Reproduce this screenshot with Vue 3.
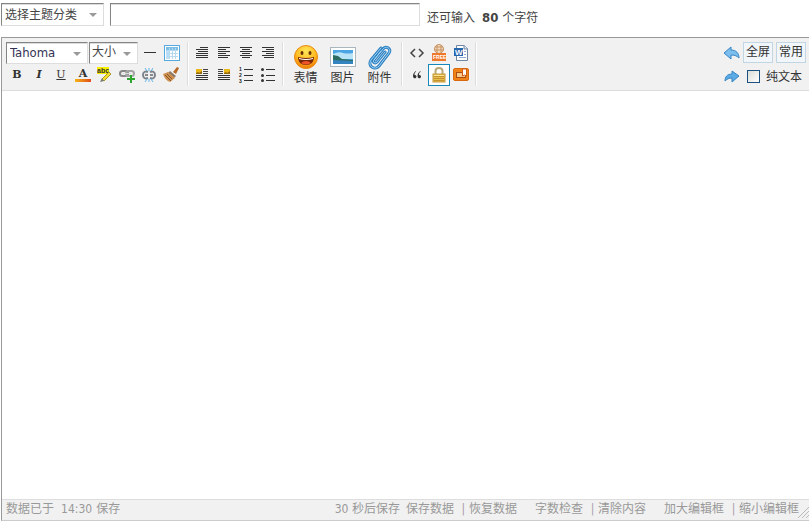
<script setup>
import { ref } from 'vue'

const topic = ref('')
const title = ref('')
const font = ref('Tahoma')
const size = ref('')
const plain = ref(false)
const content = ref('')

// Each entry lists [start, end] of the text lines, top to bottom.
const aligns = [
  { label: '自动排版', rows: [[4, 12], [0, 12], [2, 12], [0, 12], [0, 12], [0, 12]] },
  { label: '左对齐', rows: [[0, 12], [0, 8], [0, 12], [0, 8], [0, 12], [0, 10]] },
  { label: '居中', rows: [[0, 12], [2, 10], [0, 12], [2, 10], [0, 12], [2, 10]] },
  { label: '右对齐', rows: [[0, 12], [4, 12], [0, 12], [4, 12], [0, 12], [2, 12]] }
]
const floats = [
  { label: '左浮动', pic: 0, text: 7 },
  { label: '右浮动', pic: 6, text: 0 }
]
const links = [
  ['保存数据', '恢复数据'],
  ['字数检查', '清除内容'],
  ['加大编辑框', '缩小编辑框']
]
</script>

<template>
  <main class="page">
    <div class="subject">
      <span class="pick pick-topic">
        <select v-model="topic" aria-label="选择主题分类"><option value="">选择主题分类</option></select>
        <svg class="arrow" width="8" height="4" viewBox="0 0 8 4"><path d="M0 0h8L4 4z" /></svg>
      </span>
      <input v-model="title" class="title" type="text" aria-label="标题">
      <p class="left-over">还可输入<b>80</b>个字符</p>
    </div>

    <section class="editor">
      <div class="toolbar">
        <div class="group first">
          <div class="row fields">
            <span class="pick pick-font">
              <select v-model="font" aria-label="字体"><option>Tahoma</option></select>
              <svg class="arrow" width="8" height="4" viewBox="0 0 8 4"><path d="M0 0h8L4 4z" /></svg>
            </span>
            <span class="pick pick-size">
              <select v-model="size" aria-label="大小"><option value="">大小</option></select>
              <svg class="arrow" width="8" height="4" viewBox="0 0 8 4"><path d="M0 0h8L4 4z" /></svg>
            </span>
            <div class="row">
              <button class="tool" aria-label="分隔线"><svg width="16" height="16"><path d="M2 7.500h12" stroke="#333" /></svg></button>
              <button class="tool" aria-label="表格">
                <svg width="16" height="16">
                  <rect x=".5" y=".5" width="15" height="15" fill="#fff" stroke="#55a9dc" />
                  <path d="M2 2h12v3H2z" fill="#7cbde8" /><path d="M2 5h3v9H2z" fill="#b9def5" />
                  <path d="M2 5.500h12M2 8.500h12M2 11.500h12M5.500 3v11M8.500 3v11M11.500 3v11" stroke="#b4d9f1" fill="none" />
                </svg>
              </button>
            </div>
          </div>
          <div class="row">
            <button class="tool letter bold" aria-label="粗体">B</button>
            <button class="tool letter italic" aria-label="斜体">I</button>
            <button class="tool letter under" aria-label="下划线">U</button>
            <button class="tool letter color" aria-label="文字颜色">A</button>
            <button class="tool" aria-label="背景色">
              <svg width="16" height="16">
                <rect width="12" height="7" fill="#f8f000" /><text class="mini" x="0" y="6" font-size="7" fill="#333">abc</text>
                <path d="M5 12l7-7 2 2-7 7z" fill="#f5df2b" stroke="#a89a2a" /><path d="M5 11l2 3-4 1z" fill="#777" />
              </svg>
            </button>
            <button class="tool" aria-label="插入链接">
              <svg width="16" height="16">
                <g fill="none"><rect x="1" y="4" width="8" height="5" rx="2.500" stroke="#888" stroke-width="2" /><rect x="7" y="4" width="8" height="5" rx="2.500" stroke="#a5a5a5" stroke-width="2" /><path d="M4 6.500h8" stroke="#ddd" /></g>
                <path d="M11 8h2v3h3v2h-3v3h-2v-3H8v-2h3z" fill="#2ea52e" />
              </svg>
            </button>
            <button class="tool" aria-label="移除链接">
              <svg width="16" height="16" fill="none">
                <path d="M7 5C4 4 2 5 2 8s2 4 5 3M9 5c3-1 5 0 5 3s-2 4-5 3" stroke="#7b838d" stroke-width="2" /><path d="M4 8h3M9 8h3" stroke="#888" stroke-width="2" />
                <path d="M8 1v3M4 1l2 3M12 1l-2 3M8 12v3M4 15l2-3M12 15l-2-3" stroke="#62b5e8" />
              </svg>
            </button>
            <button class="tool" aria-label="清除格式">
              <svg width="16" height="16">
                <path d="M10 5l4-5 2 1-3 6z" fill="#b86924" /><path d="M7 4l6 5-2 2-6-5z" fill="#8d7968" />
                <path d="M5 5l7 6-5 4C4 14 1 11 0 7z" fill="#cf9152" /><path d="M2 8l6 6M4 7l5 5" stroke="#865325" />
              </svg>
            </button>
          </div>
        </div>

        <div class="group second">
          <div class="row">
            <button v-for="a in aligns" :key="a.label" class="tool" :aria-label="a.label">
              <svg width="12" height="12"><rect v-for="(r, i) in a.rows" :key="i" :x="r[0]" :y="i * 2" :width="r[1] - r[0]" height="1" fill="#333" /></svg>
            </button>
          </div>
          <div class="row">
            <button v-for="f in floats" :key="f.label" class="tool" :aria-label="f.label">
              <svg width="12" height="12">
                <rect :x="f.pic" width="6" height="5" fill="#e9b818" /><path :transform="`translate(${f.pic})`" d="M0 5V4l2-1 1 1 3-2v3z" fill="#95670b" />
                <path :transform="`translate(${f.text})`" d="M0 .5h5M0 2.500h5M0 4.500h5" stroke="#444" /><path d="M0 6.500h12M0 8.500h12M0 10.500h12" stroke="#333" />
              </svg>
            </button>
            <button class="tool" aria-label="排序的列表">
              <svg width="16" height="16">
                <g class="mini" font-size="5" fill="#222"><text x="1" y="4">1</text><text x="1" y="10">2</text><text x="1" y="16">3</text></g>
                <path d="M6 2.500h9M6 8.500h9M6 13.500h9" stroke="#333" />
              </svg>
            </button>
            <button class="tool" aria-label="未排序列表">
              <svg width="16" height="16">
                <g fill="#333"><circle cx="2.500" cy="2.500" r="1.500" /><circle cx="2.500" cy="8.500" r="1.500" /><circle cx="2.500" cy="13.500" r="1.500" /></g>
                <path d="M6 2.500h9M6 8.500h9M6 13.500h9" stroke="#333" />
              </svg>
            </button>
          </div>
        </div>

        <div class="group third">
          <button class="large">
            <svg width="26" height="26" viewBox="0 0 26 26">
              <defs><radialGradient id="face" cx=".5" cy=".25" r=".75"><stop stop-color="#ffe75a" /><stop offset=".6" stop-color="#ffb91f" /><stop offset="1" stop-color="#ee7b08" /></radialGradient></defs>
              <circle cx="13" cy="13" r="11.500" fill="url(#face)" stroke="#e98b17" />
              <ellipse cx="9" cy="9" rx="1.500" ry="2" fill="#693006" /><ellipse cx="17" cy="9" rx="1.500" ry="2" fill="#693006" />
              <path d="M5 13q8 2 16 0c0 5-3 8-8 8s-8-3-8-8z" fill="#792608" /><path d="M6 14q7 2 14 0v1q-7 2-14 0z" fill="#fff" /><path d="M8 19q5-4 10 0-5 3-10 0z" fill="#ef5529" />
            </svg>
            表情
          </button>
          <button class="large">
            <svg width="26" height="26" viewBox="0 0 26 26">
              <rect x=".5" y="3.500" width="25" height="19" fill="#fff" stroke="#a9b6be" />
              <path d="M3 6h20v14H3z" fill="#4aa5e2" /><path d="M3 10q6-3 10-1 5 1 10 0v6H3z" fill="#b9e4f8" />
              <path d="M3 11l5 1 4 3 11 1v1H3z" fill="#2d6d61" /><path d="M3 16l20 1v3H3z" fill="#3484c0" />
            </svg>
            图片
          </button>
          <button class="large">
            <svg width="26" height="26" viewBox="0 0 26 26" fill="none" stroke-linecap="round">
              <path d="M7 16L16 5c3-4 9 0 6 4L12 22c-4 5-12 0-8-6L14 4M18 8l-8 10c-2 2-5 0-3-2l7-9" stroke="#2f80c2" stroke-width="3" />
              <path d="M7 16L16 5c3-4 9 0 6 4L12 22c-4 5-12 0-8-6L14 4M18 8l-8 10c-2 2-5 0-3-2l7-9" stroke="#9bd4f5" />
            </svg>
            附件
          </button>
        </div>

        <div class="group fourth">
          <div class="row">
            <button class="tool" aria-label="代码"><svg width="16" height="16" fill="none" stroke="#444" stroke-width="1.500"><path d="M6 4L2 8l4 4M10 4l4 4-4 4" /></svg></button>
            <button class="tool" aria-label="免费信息">
              <svg width="16" height="18">
                <g fill="none" stroke="#c79465"><circle cx="8" cy="5" r="4.500" fill="#f4d9bd" /><path d="M4 3h8M3 6h10M6 1v9M10 1v9" /></g>
                <rect x="1" y="9" width="14" height="8" fill="#ef782c" /><text class="mini" x="2" y="15" font-size="5" fill="#fff">FREE</text>
              </svg>
            </button>
            <button class="tool" aria-label="粘贴 Word">
              <svg width="16" height="16">
                <path d="M3.500.5h8l3 3v12h-11z" fill="#fff" stroke="#7087a3" /><path d="M11 0v4h4" fill="#d4e2f2" stroke="#7087a3" /><path d="M6 12.500h7M11 6.500h2M11 9.500h2" stroke="#91acd0" />
                <rect x="1" y="3" width="9" height="8" fill="#2866ad" /><text class="mini" x="2" y="10" font-size="8" fill="#fff">W</text>
              </svg>
            </button>
          </div>
          <div class="row">
            <button class="tool" aria-label="引用"><svg width="8" height="8" fill="#333"><path d="M3 0C1 1 0 3 0 5c0 3 3.500 3 3.500.500C3.500 4 2 4 1.500 4 1.500 2 2 1 3 1zM7.500 0c-2 1-3 3-3 5 0 3 3.500 3 3.500.500C8 4 6.500 4 6 4c0-2 .5-3 1.500-3z" /></svg></button>
            <button class="tool active" aria-label="密码">
              <svg width="14" height="16">
                <path d="M3.500 8V4c0-4 7-4 7 0v4" fill="none" stroke="#b9a878" stroke-width="2" /><rect x="1" y="7" width="12" height="8" fill="#e7bd4c" stroke="#c4973a" />
                <path d="M2 9.500h10M2 11.500h10M2 13.500h10" stroke="#c6922f" /><path d="M2 8.500h10" stroke="#ffe698" />
              </svg>
            </button>
            <button class="tool" aria-label="隐藏内容">
              <svg width="16" height="14">
                <rect x=".5" y=".5" width="15" height="12" rx="1.500" fill="#f08318" stroke="#d9690f" /><rect x="3.500" y="4.500" width="9" height="5" fill="#f8c98b" stroke="#a84c12" />
                <path d="M9.500 1h4v7l-2-1-2 1z" fill="#fff" stroke="#d65c12" />
              </svg>
            </button>
          </div>
        </div>

        <div class="modes">
          <div class="row top">
            <button class="tool" aria-label="撤销">
              <svg width="16" height="14"><path d="M0 7l7-6v3c5 0 8 3 8 8-2-2-4-3-8-3v4z" fill="#7bbdec" stroke="#3585c4" /></svg>
            </button>
            <button class="mode">全屏</button>
            <button class="mode">常用</button>
          </div>
          <div class="row">
            <button class="tool" aria-label="重做">
              <svg width="16" height="14"><path d="M15 6L8 1v3C3 4 1 7 1 11c2-2 4-3 7-3v4z" fill="#5aabe5" stroke="#3585c4" /></svg>
            </button>
            <label class="plain"><input v-model="plain" type="checkbox">纯文本</label>
          </div>
        </div>
      </div>

      <textarea v-model="content" class="content" aria-label="内容"></textarea>

      <footer class="status">
        <span class="saved">数据已于<span class="time">14:30</span>保存</span>
        <span class="count">30 秒后保存</span>
        <div class="links">
          <span v-for="pair in links" :key="pair[0]" class="pair">
            <a href="#">{{ pair[0] }}</a><span class="bar">|</span><a href="#">{{ pair[1] }}</a>
          </span>
        </div>
        <svg class="grip" width="12" height="12" stroke="#bbb"><path d="M1 12L12 1M5 12l7-7M9 12l3-3" /></svg>
      </footer>
    </section>
  </main>
</template>

<style>
body { margin: 0; background: #fff; }
</style>

<style scoped>
* { box-sizing: border-box; }
.page {
  display: flex;
  flex-direction: column;
  min-height: 100vh;
  padding: 3px 0 0 1px;
  color: #444;
  font: 12px/16px "DejaVu Sans Condensed", "Noto Sans CJK SC", sans-serif;
}
button, input, select, textarea { margin: 0; font: inherit; color: inherit; border-radius: 0; }
.subject { display: flex; gap: 6px; height: 34px; }
.pick { position: relative; display: block; height: 22px; }
.pick select {
  display: block;
  appearance: none;
  width: 100%;
  height: 100%;
  padding: 0 0 2px 2px;
  outline: none;
}
.pick select, .title {
  background: #fff;
  border: 1px solid;
  border-color: #848484 #ddd #ddd #848484;
  box-shadow: inset 0 1px #ddd;
}
.arrow { position: absolute; right: 7px; top: 10px; fill: #999; pointer-events: none; }
.pick-topic { width: 103px; height: 23px; }
.pick-topic select { padding: 0 0 0 3px; }
.pick-font { width: 82px; }
.pick-font select { padding: 0 0 0 3px; color: #335; font-size: 13px; }
.pick-size { width: 49px; }
.title { width: 310px; height: 23px; padding: 0 4px; outline: none; }
.left-over { margin: 7px 0 0 1px; }
.left-over b { margin: 0 4px 0 7px; font-size: 13px; }
.editor {
  display: flex;
  flex: 1;
  flex-direction: column;
  border: 1px solid #999;
  border-right: 0;
  border-bottom-color: #ccc;
}
.toolbar { display: flex; padding: 4px 0; background: #f1f1f1; border-bottom: 1px solid #ddd; }
.group { padding: 0 3px; border-right: 1px solid #ddd; box-shadow: 1px 0 #fff; }
.first { padding: 0 4px; }
.third { display: flex; padding-left: 4px; }
.fourth { padding-left: 4px; }
.row { display: flex; align-items: center; height: 22px; }
.top { align-items: flex-start; }
.fields { gap: 1px; }
button { padding: 0; background: none; border: 0; }
.tool { display: flex; align-items: center; justify-content: center; width: 22px; height: 22px; }
.mini { font-family: "Liberation Sans", sans-serif; font-weight: bold; }
.letter { font: 11px/22px "DejaVu Serif", "Liberation Serif", serif; color: #333; }
.bold { font-weight: bold; }
.italic { font-style: italic; font-weight: bold; }
.under { text-decoration: underline; }
.color { position: relative; font-weight: bold; line-height: 20px; align-items: flex-start; }
.color::after {
  content: "";
  position: absolute;
  left: 3px;
  right: 3px;
  bottom: 4px;
  height: 3px;
  background: linear-gradient(90deg, #f6b414, #df4d1c);
}
.active { background: #fff; border: 1px solid #1689b8; }
.large {
  display: flex;
  flex-direction: column;
  align-items: center;
  gap: 1px;
  width: 37px;
  padding-top: 2px;
  line-height: 14px;
  color: #333;
}
.modes { margin-left: auto; padding-right: 3px; color: #333; }
.mode { width: 30px; height: 21px; margin-right: 3px; background: #f0f6fa; border: 1px solid #c2d5e3; line-height: 17px; }
.mode:last-child { margin-right: 0; }
.modes .row:last-child { padding-top: 3px; }
.plain { display: flex; align-items: center; gap: 6px; margin-left: 4px; }
.plain input { appearance: none; width: 13px; height: 13px; background: linear-gradient(135deg, #dcdcd7, #fff); border: 1px solid #1c5180; }
.plain input:checked { background: #1c5180; }
.content { display: block; flex: 1; width: 100%; padding: 5px; border: 0; outline: none; resize: none; }
.status {
  position: relative;
  display: flex;
  align-items: center;
  height: 21px;
  padding: 0 10px 2px 4px;
  color: #999;
  background: #f1f1f1;
  border-top: 1px solid #ddd;
}
.time { margin: 0 4px 0 7px; }
.count { margin-left: auto; }
.links { display: flex; gap: 18px; margin-left: 6px; }
.pair { display: flex; }
.pair a { color: inherit; text-decoration: none; }
.bar { width: 5px; margin: 0 3px 0 7px; text-align: center; color: #a9a; }
.grip { position: absolute; right: 0; bottom: 2px; }
</style>
